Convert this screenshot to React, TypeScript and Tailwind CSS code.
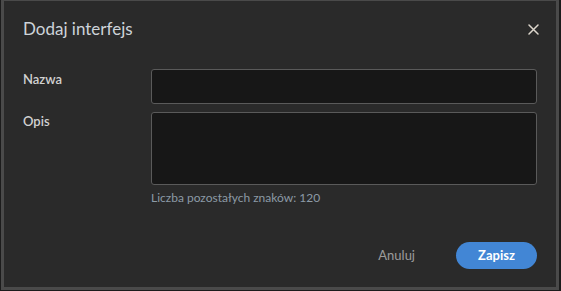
export default function App() {
  return (
    <div className="h-[291px] w-[561px] bg-[#1c1c1c] overflow-hidden" style={{ fontFamily: "Lato, 'Open Sans', sans-serif" }}>
      <div className="ml-[1px] w-[558px] h-[290px] border-x-[3px] border-b-[3px] border-t border-[#4a4a4a] bg-[#2a2a2a] flex flex-col">
        <div className="h-[56px] flex items-center justify-between pl-[19px] pr-[17px]">
          <h1 className="text-[17px] text-[#cdd3d9] leading-6">Dodaj interfejs</h1>
          <svg width="11" height="11" viewBox="0 0 11 11" className="text-[#dcd6cc]">
            <path d="M1 1 L10 10 M10 1 L1 10" stroke="currentColor" strokeWidth="1.5" strokeLinecap="round" />
          </svg>
        </div>
        <div className="px-[19px] pt-[12px] flex flex-col gap-[8px]">
          <div className="flex">
            <label className="w-[128px] text-[13px] text-[#d2d2d2] font-semibold leading-4 pt-[2px]">Nazwa</label>
            <input className="flex-1 h-[35px] rounded-[3px] border border-[#5a5a5a] bg-[#171717] outline-none" />
          </div>
          <div className="flex">
            <label className="w-[128px] text-[13px] text-[#d2d2d2] font-semibold leading-4 pt-[1px]">Opis</label>
            <div className="flex-1 flex flex-col">
              <textarea className="h-[73px] rounded-[3px] border border-[#5a5a5a] bg-[#171717] outline-none resize-none" />
              <p className="mt-[5px] text-[12px] text-[#8c9aa6] leading-4">Liczba pozostałych znaków: 120</p>
            </div>
          </div>
        </div>
        <div className="mt-auto mb-[18px] px-[19px] flex justify-end items-center">
          <button className="text-[13px] text-[#9c9c9c] mr-[41px]">Anuluj</button>
          <button className="w-[81px] h-[27px] rounded-full bg-[#4286d5] text-white text-[13px] font-bold">Zapisz</button>
        </div>
      </div>
    </div>
  );
}
